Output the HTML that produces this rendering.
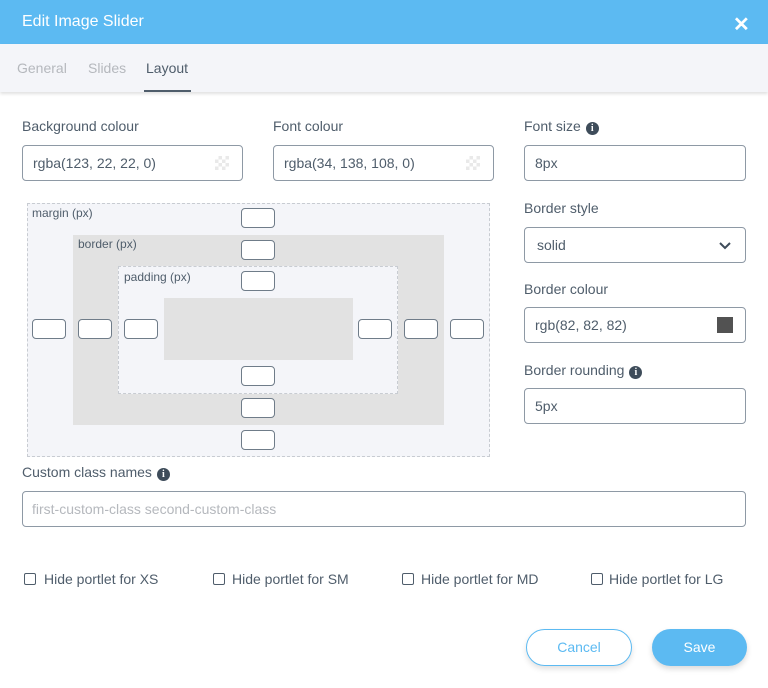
<!DOCTYPE html>
<html><head><style>
*{box-sizing:border-box;margin:0;padding:0}
body{width:768px;height:688px;background:#fff;font-family:"Liberation Sans",sans-serif;color:#4f5d6b;position:relative;overflow:hidden}
.a{position:absolute}
.hdr{left:0;top:0;width:768px;height:44px;background:#5cbaf2;color:#fff;font-size:16px;line-height:44px;padding-left:22px}
.tabs{left:0;top:44px;width:768px;height:48px;background:#f4f5f9;box-shadow:0 2px 3px rgba(0,0,0,.12)}
.tab{top:16px;font-size:14px;color:#b5b8bd}
.lbl{font-size:14px;color:#4f5d6b}
.inp{border:1px solid #8e99a5;border-radius:4px;background:#fff;font-size:14px;color:#4f5d6b;padding-left:10px;display:flex;align-items:center}
.sm{width:34px;height:20px;border:1px solid #6f7c89;border-radius:4px;background:#fff}
.info{display:inline-block;width:13px;height:13px;border-radius:50%;background:#3e4c5a;color:#fff;font-size:10px;font-weight:bold;text-align:center;line-height:13px;vertical-align:0;margin-left:5px;font-family:"Liberation Serif",serif}
.chk{width:12px;height:12px;border:1.5px solid #4f5d6b;border-radius:2px}
.ct{font-size:14px;top:571px}
.chq{width:14px;height:14px;background:repeating-conic-gradient(#e3e3e3 0 25%,#fff 0 50%) 0 0/7px 7px;opacity:.8}
</style></head><body>
<div class="a hdr">Edit Image Slider</div>
<div class="a" style="left:733px;top:12px;color:#fff;font-size:20px;font-weight:bold">✕</div>
<div class="a tabs"></div>
<div class="a tab" style="left:17px;top:60px">General</div>
<div class="a tab" style="left:88px;top:60px">Slides</div>
<div class="a tab" style="left:146px;top:60px;color:#4f5d6b">Layout</div>
<div class="a" style="left:144px;top:90px;width:47px;height:2px;background:#4f5d6b"></div>

<div class="a lbl" style="left:22px;top:118px">Background colour</div>
<div class="a inp" style="left:22px;top:145px;width:221px;height:36px">rgba(123, 22, 22, 0)</div>
<div class="a chq" style="left:215px;top:156px"></div>
<div class="a lbl" style="left:273px;top:118px">Font colour</div>
<div class="a inp" style="left:273px;top:145px;width:221px;height:36px">rgba(34, 138, 108, 0)</div>
<div class="a chq" style="left:466px;top:156px"></div>
<div class="a lbl" style="left:524px;top:118px">Font size<span class="info">i</span></div>
<div class="a inp" style="left:524px;top:145px;width:222px;height:36px">8px</div>
<div class="a lbl" style="left:524px;top:200px">Border style</div>
<div class="a inp" style="left:524px;top:227px;width:222px;height:36px;padding-left:12px">solid</div>
<svg class="a" style="left:718px;top:241px" width="14" height="9"><path d="M2 2l5 5 5-5" stroke="#3e4c5a" stroke-width="2" fill="none"/></svg>
<div class="a lbl" style="left:524px;top:281px">Border colour</div>
<div class="a inp" style="left:524px;top:307px;width:222px;height:36px">rgb(82, 82, 82)</div>
<div class="a" style="left:717px;top:317px;width:16px;height:16px;background:#525252"></div>
<div class="a lbl" style="left:524px;top:362px">Border rounding<span class="info">i</span></div>
<div class="a inp" style="left:524px;top:388px;width:222px;height:36px">5px</div>

<div class="a" style="left:27px;top:203px;width:463px;height:254px;border:1px dashed #c8ccd2;background:#f4f5f9"></div>
<div class="a" style="left:32px;top:206px;font-size:12px">margin (px)</div>
<div class="a" style="left:73px;top:235px;width:371px;height:190px;background:#e2e2e2"></div>
<div class="a" style="left:78px;top:237px;font-size:12px">border (px)</div>
<div class="a" style="left:118px;top:266px;width:280px;height:128px;border:1px dashed #c8ccd2;background:#f4f5f9"></div>
<div class="a" style="left:124px;top:270px;font-size:12px">padding (px)</div>
<div class="a" style="left:164px;top:298px;width:189px;height:62px;background:#e2e2e2"></div>
<div class="a sm" style="left:241px;top:208px"></div>
<div class="a sm" style="left:241px;top:240px"></div>
<div class="a sm" style="left:241px;top:271px"></div>
<div class="a sm" style="left:241px;top:366px"></div>
<div class="a sm" style="left:241px;top:398px"></div>
<div class="a sm" style="left:241px;top:430px"></div>
<div class="a sm" style="left:32px;top:319px"></div>
<div class="a sm" style="left:78px;top:319px"></div>
<div class="a sm" style="left:124px;top:319px"></div>
<div class="a sm" style="left:358px;top:319px"></div>
<div class="a sm" style="left:404px;top:319px"></div>
<div class="a sm" style="left:450px;top:319px"></div>

<div class="a lbl" style="left:22px;top:464px">Custom class names<span class="info">i</span></div>
<div class="a inp" style="left:22px;top:491px;width:724px;height:36px;color:#b5b8bd;padding-left:9px">first-custom-class second-custom-class</div>

<div class="a chk" style="left:24px;top:573px"></div><div class="a ct" style="left:44px">Hide portlet for XS</div>
<div class="a chk" style="left:213px;top:573px"></div><div class="a ct" style="left:232px">Hide portlet for SM</div>
<div class="a chk" style="left:402px;top:573px"></div><div class="a ct" style="left:421px">Hide portlet for MD</div>
<div class="a chk" style="left:591px;top:573px"></div><div class="a ct" style="left:609px">Hide portlet for LG</div>

<div class="a" style="left:526px;top:629px;width:106px;height:37px;border:1px solid #5cbaf2;border-radius:19px;background:#fff;color:#5cbaf2;font-size:14px;text-align:center;line-height:35px;box-shadow:0 3px 6px rgba(0,0,0,.12)">Cancel</div>
<div class="a" style="left:652px;top:629px;width:95px;height:37px;border-radius:19px;background:#5cbaf2;color:#fff;font-size:14px;text-align:center;line-height:37px;box-shadow:0 3px 6px rgba(0,0,0,.15)">Save</div>
</body></html>
